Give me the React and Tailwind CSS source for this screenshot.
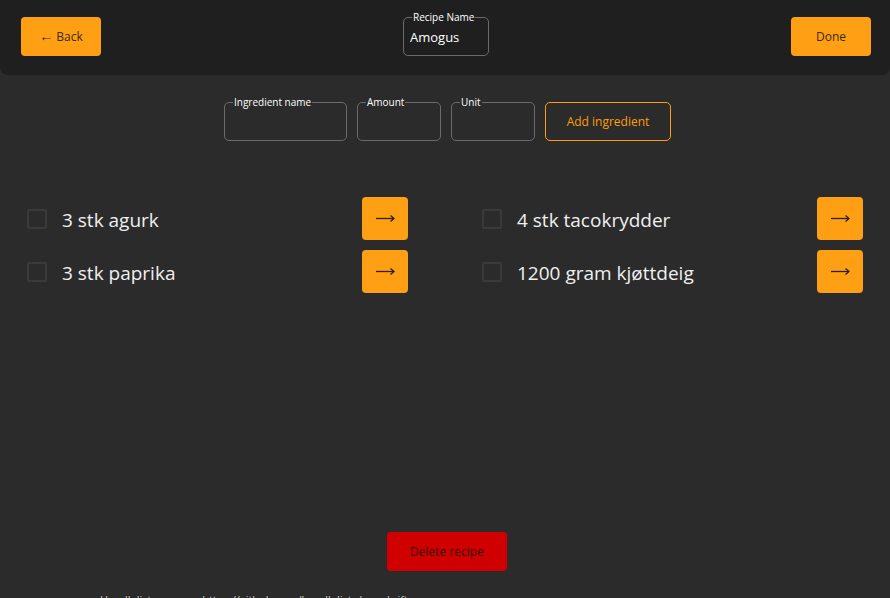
import { useState } from "react";

const ingredients = [
  { id: 1, text: "3 stk agurk" },
  { id: 2, text: "4 stk tacokrydder" },
  { id: 3, text: "3 stk paprika" },
  { id: 4, text: "1200 gram kjøttdeig" },
];

function LabeledInput({ label, width, value, onChange, bg = "bg-[#2b2b2b]" }) {
  return (
    <div className={`relative h-[39px] rounded-[5px] border border-[#6b6b6b] ${width}`}>
      <span className={`absolute -top-[7px] left-[8px] px-[1px] text-[10px] leading-[12px] text-white ${bg}`}>
        {label}
      </span>
      <input
        value={value}
        onChange={(e) => onChange(e.target.value)}
        className="h-full w-full bg-transparent px-[6px] pt-[1px] text-[13px] text-white outline-none"
      />
    </div>
  );
}

function ArrowRight() {
  return (
    <svg width="19" height="9" viewBox="0 0 19 9" fill="none" stroke="#2a2010" strokeWidth="1.3">
      <path d="M0 4.5 H18" />
      <path d="M14.5 1.5 L18 4.5 L14.5 7.5" />
    </svg>
  );
}

export default function App() {
  const [name, setName] = useState("Amogus");
  const [ingName, setIngName] = useState("");
  const [amount, setAmount] = useState("");
  const [unit, setUnit] = useState("");
  const [checked, setChecked] = useState({});

  return (
    <div className="min-h-screen bg-[#2b2b2b] font-['Open_Sans',sans-serif] text-white">
      {/* Header */}
      <div className="flex h-[75px] items-start justify-between rounded-b-[8px] bg-[#1f1f1f] px-[19px] pt-[17px]">
        <button className="ml-[2px] h-[39px] w-[80px] rounded-[4px] bg-[#ffa014] text-[12px] text-[#3a2a10]">
          <span className="font-['Liberation_Sans',sans-serif] text-[14px]">←</span> Back
        </button>
        <LabeledInput
          label="Recipe Name"
          width="w-[86px]"
          value={name}
          onChange={setName}
          bg="bg-[#1f1f1f]"
        />
        <button className="h-[39px] w-[80px] rounded-[4px] bg-[#ffa014] text-[12px] text-[#3a2a10]">
          Done
        </button>
      </div>

      {/* Add ingredient */}
      <div className="mt-[27px] flex justify-center gap-[10px] pl-[5px]">
        <LabeledInput label="Ingredient name" width="w-[123px]" value={ingName} onChange={setIngName} />
        <LabeledInput label="Amount" width="w-[84px]" value={amount} onChange={setAmount} />
        <LabeledInput label="Unit" width="w-[84px]" value={unit} onChange={setUnit} />
        <button className="h-[39px] w-[126px] rounded-[5px] border border-[#ff9c0a] text-[12px] text-[#ff9c0a]">
          Add ingredient
        </button>
      </div>

      {/* Ingredient list */}
      <div className="mt-[56px] grid grid-cols-2 gap-x-[74px] gap-y-[10px] px-[27px]">
        {ingredients.map((item) => (
          <div key={item.id} className="flex h-[43px] items-center">
            <button
              onClick={() => setChecked((c) => ({ ...c, [item.id]: !c[item.id] }))}
              className="h-[20px] w-[20px] shrink-0 rounded-[2px] border-2 border-[#3a3a3a]"
            />
            <span className="ml-[15px] flex-1 pt-[3px] text-[19px] text-[#f0f0f0]">{item.text}</span>
            <button className="flex h-[43px] w-[46px] items-center justify-center rounded-[4px] bg-[#ffa014]">
              <ArrowRight />
            </button>
          </div>
        ))}
      </div>

      {/* Delete */}
      <div className="mt-[239px] flex justify-center pl-[4px]">
        <button className="h-[39px] w-[120px] rounded-[4px] bg-[#d10000] text-[12px] text-[#3a0000]">
          Delete recipe
        </button>
      </div>

      <div className="mt-[21px] pl-[100px] pb-4 text-[11px] text-[#c8c8c8]">
        Handleliste-appen · https://github.com/handleliste/oppskrifter
      </div>
    </div>
  );
}
